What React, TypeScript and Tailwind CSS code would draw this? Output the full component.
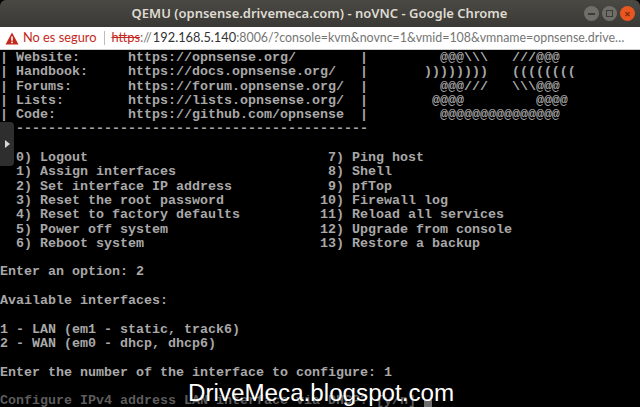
const lines = [
  "| Website:      https://opnsense.org/        |         @@@\\\\\\   ///@@@",
  "| Handbook:     https://docs.opnsense.org/   |       ))))))))   ((((((((",
  "| Forums:       https://forum.opnsense.org/  |         @@@///   \\\\\\@@@",
  "| Lists:        https://lists.opnsense.org/  |        @@@@         @@@@",
  "| Code:         https://github.com/opnsense  |         @@@@@@@@@@@@@@@",
  "  --------------------------------------------",
  "",
  "  0) Logout                              7) Ping host",
  "  1) Assign interfaces                   8) Shell",
  "  2) Set interface IP address            9) pfTop",
  "  3) Reset the root password            10) Firewall log",
  "  4) Reset to factory defaults          11) Reload all services",
  "  5) Power off system                   12) Upgrade from console",
  "  6) Reboot system                      13) Restore a backup",
  "",
  "Enter an option: 2",
  "",
  "Available interfaces:",
  "",
  "1 - LAN (em1 - static, track6)",
  "2 - WAN (em0 - dhcp, dhcp6)",
  "",
  "Enter the number of the interface to configure: 1",
  "",
];

function WindowButton({ children, close = false }: { children: React.ReactNode; close?: boolean }) {
  return (
    <div
      className={
        close
          ? "flex h-[15px] w-[15px] items-center justify-center rounded-full bg-[#e9561f] text-[#7a2a10]"
          : "flex h-[15px] w-[15px] items-center justify-center rounded-full bg-[#6f6e68] text-[#3c3b37]"
      }
    >
      {children}
    </div>
  );
}

export default function App() {
  return (
    <div className="relative flex h-[407px] w-[640px] flex-col overflow-hidden bg-black">
      {/* title bar */}
      <div className="relative flex h-[27px] shrink-0 items-center justify-center rounded-t-[6px] bg-gradient-to-b from-[#4a4944] to-[#3a3935] font-['Noto_Sans',sans-serif] text-[13px] font-semibold text-[#dfdbd2]">
        <span className="ml-[-1px]">QEMU (opnsense.drivemeca.com) - noVNC - Google Chrome</span>
        <div className="absolute right-[5px] top-[6px] flex gap-[3px]">
          <WindowButton>
            <div className="h-[2px] w-[7px] bg-current" />
          </WindowButton>
          <WindowButton>
            <div className="h-[7px] w-[7px] border border-current" />
          </WindowButton>
          <WindowButton close>
            <span className="text-[11px] font-bold leading-none">×</span>
          </WindowButton>
        </div>
      </div>

      {/* address bar */}
      <div className="flex h-[23px] shrink-0 items-center whitespace-nowrap border-b border-[#d0d0d0] bg-white pl-[5px] font-['Lato',sans-serif] text-[12.8px]">
        <svg width="14" height="13" viewBox="0 0 14 13" className="shrink-0">
          <path d="M7 0.5 L13.5 12.5 L0.5 12.5 Z" fill="#c5281c" />
          <rect x="6.2" y="4.5" width="1.6" height="4.2" fill="#fff" />
          <rect x="6.2" y="9.6" width="1.6" height="1.6" fill="#fff" />
        </svg>
        <span className="ml-[4px] text-[#c5281c]">No es seguro</span>
        <div className="ml-[8px] h-[14px] w-px bg-[#bdbdbd]" />
        <span className="ml-[6px] text-[#c5281c] line-through">https</span>
        <span className="text-[#757575]">://</span>
        <span className="ml-px text-[#333]">192.168.5.140</span>
        <span className="text-[12.4px] text-[#757575]">:8006/?console=kvm&amp;novnc=1&amp;vmid=108&amp;vmname=opnsense.drive…</span>
      </div>

      {/* console */}
      <div className="relative flex-1 overflow-hidden bg-black pt-px font-['Liberation_Mono',monospace] text-[13.33px] font-bold text-[#a8a8a8]">
        {lines.map((line, i) => (
          <div key={i} className="h-[14.3px] whitespace-pre leading-[14.3px]">
            {line}
          </div>
        ))}
        <div className="flex h-[14.3px] whitespace-pre leading-[14.3px] text-[#5c5c5c]">
          <span>Configure IPv4 address LAN interface via DHCP? [y/n] </span>
          <div className="mt-[6px] h-[8px] w-[8px] bg-[#6e6e6e]" />
        </div>

        {/* noVNC control handle */}
        <div className="absolute left-0 top-[72px] flex h-[44px] w-[14px] items-center justify-center rounded-r-[4px] bg-[#2e2e2e]">
          <div className="h-0 w-0 border-y-[4px] border-l-[5px] border-y-transparent border-l-[#d8d8d8]" />
        </div>

        {/* watermark */}
        <div className="absolute bottom-0 left-[188px] font-['Liberation_Sans',sans-serif] text-[24.2px] font-normal leading-[28px] text-white">
          DriveMeca.blogspot.com
        </div>
      </div>
    </div>
  );
}
